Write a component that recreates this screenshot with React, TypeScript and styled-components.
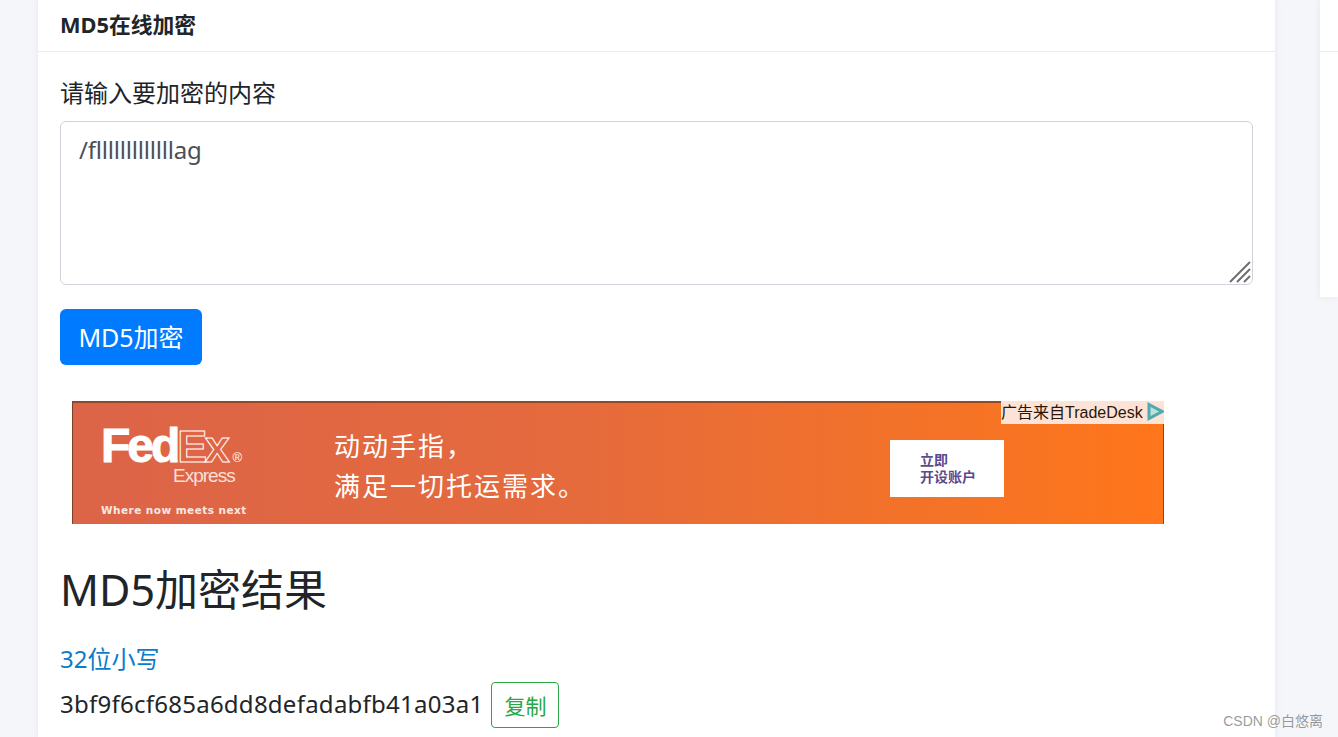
import * as React from "react";
import styled, { createGlobalStyle } from "styled-components";

const FONT = `"Noto Sans", "Noto Sans CJK SC", sans-serif`;

const GlobalStyle = createGlobalStyle`
	html, body {
		margin: 0;
		height: 737px;
		overflow: hidden;
		background: #f5f6f9;
		font-family: ${FONT};
		color: #212529;
	}
`;

const Page = styled.div`
	display: grid;
	grid-template-columns: 1237px 1fr;
	column-gap: 45px;
	align-items: start;
	height: 737px;
	padding-left: 38px;
	overflow: hidden;
`;

const Card = styled.main`
	background: #fff;
	height: 737px;
	box-shadow: 0 0 6px rgba(180, 190, 205, 0.25);
`;

const CardHeader = styled.header`
	height: 52px;
	box-sizing: border-box;
	padding: 0 0 4px 22px;
	border-bottom: 1px solid #e9ecef;
	display: flex;
	align-items: center;
	font-size: 21.8px;
	font-weight: 700;
	color: #212529;
`;

const CardBody = styled.section`
	padding: 0 22px;
`;

const FieldLabel = styled.label`
	display: block;
	margin-top: 23px;
	height: 46px;
	line-height: 36px;
	font-size: 24px;
`;

const TextBox = styled.div`
	position: relative;
	height: 164px;
`;

const Input = styled.textarea`
	display: block;
	box-sizing: border-box;
	width: 100%;
	height: 100%;
	padding: 10px 18px;
	border: 1px solid #ced4da;
	border-radius: 6px;
	background: #fff;
	color: #495057;
	font-family: ${FONT};
	font-size: 24px;
	letter-spacing: -0.2px;
	line-height: 36px;
	resize: none;
	outline: none;
`;

const Grip = styled.svg`
	position: absolute;
	right: 2px;
	bottom: 2px;
	width: 22px;
	height: 22px;
`;

const PrimaryButton = styled.button`
	display: block;
	margin-top: 24px;
	width: 142px;
	height: 56px;
	padding: 0 0 2px;
	border: none;
	border-radius: 6px;
	background: #007bff;
	color: #fff;
	font-family: ${FONT};
	font-size: 25px;
`;

const Ad = styled.aside`
	position: relative;
	margin: 36px 0 0 12px;
	width: 1092px;
	height: 123px;
	box-sizing: border-box;
	border-top: 2px solid #8f4a2c;
	border-left: 1px solid #7d4028;
	border-right: 1px solid #8a4a10;
	background: linear-gradient(90deg, #dc6448 0%, #e56a3d 45%, #f2722a 75%, #ff761b 100%);
	display: flex;
	color: #fff;
`;

const Brand = styled.div`
	width: 261px;
	padding-left: 28px;
	box-sizing: border-box;
	display: flex;
	flex-direction: column;
`;

const BrandMark = styled.div`
	margin-top: 23px;
	height: 40px;
	display: flex;
	align-items: baseline;
	font-family: "Liberation Sans", sans-serif;
	font-size: 48px;
	line-height: 40px;
	letter-spacing: -3px;
`;

const Fed = styled.span`
	font-weight: 700;
	-webkit-text-stroke: 1px #fff;
`;

const Ex = styled.span`
	font-weight: 700;
	font-size: 45px;
	letter-spacing: -2.5px;
	color: transparent;
	-webkit-text-stroke: 1px #fff;
`;

const Reg = styled.span`
	font-size: 13px;
	letter-spacing: 0;
	margin-left: 5px;
`;

const BrandSub = styled.div`
	margin-left: 72px;
	font-family: "Liberation Sans", sans-serif;
	font-size: 19px;
	line-height: 20px;
	letter-spacing: -1px;
	opacity: 0.8;
`;

const BrandTag = styled.div`
	margin-top: 17px;
	font-family: "DejaVu Sans", sans-serif;
	font-size: 10.5px;
	font-weight: 700;
	line-height: 14px;
	letter-spacing: 0.45px;
	opacity: 0.85;
`;

const Copy = styled.div`
	width: 556px;
	padding-top: 22px;
	font-family: "Noto Sans CJK SC", sans-serif;
	font-size: 26px;
	line-height: 40px;
	letter-spacing: 2px;
`;

const CtaBox = styled.div`
	margin-top: 37px;
	width: 114px;
	height: 57px;
	box-sizing: border-box;
	padding: 11px 0 0 30px;
	background: #fff;
	color: #5b4a8f;
	font-family: "Noto Sans CJK SC", sans-serif;
	font-size: 14px;
	font-weight: 700;
	line-height: 17px;
`;

const AdBadge = styled.div`
	position: absolute;
	top: -2px;
	right: -1px;
	width: 163px;
	height: 23px;
	box-sizing: border-box;
	padding-bottom: 3px;
	display: flex;
	align-items: center;
	justify-content: space-between;
	background: #fde3d6;
	color: #2a1608;
	font-family: "Liberation Sans", "Noto Sans CJK SC", sans-serif;
	font-size: 16px;
	white-space: nowrap;
`;

const AdIcon = styled.svg`
	width: 17px;
	height: 19px;
	flex: none;
`;

const ResultTitle = styled.h2`
	margin: 36px 0 0;
	height: 60px;
	line-height: 60px;
	font-size: 43px;
	font-weight: 400;
`;

const ResultLink = styled.a`
	display: block;
	margin-top: 21px;
	height: 36px;
	line-height: 36px;
	font-size: 24px;
	color: #0a7cc9;
`;

const ResultRow = styled.div`
	display: flex;
	align-items: center;
	gap: 8px;
	margin-top: 5px;
	font-size: 24px;
	letter-spacing: 0.25px;
`;

const HashText = styled.span`
	padding-bottom: 4px;
`;

const CopyButton = styled.button`
	width: 68px;
	height: 46px;
	padding: 0;
	border: 1px solid #28a745;
	border-radius: 4px;
	background: #fff;
	color: #28a745;
	font-family: ${FONT};
	font-size: 21px;
`;

const SideCard = styled.aside`
	background: #fff;
	height: 297px;
	box-shadow: 0 0 6px rgba(180, 190, 205, 0.25);
`;

const SideHeader = styled.div`
	height: 52px;
	box-sizing: border-box;
	border-bottom: 1px solid #e9ecef;
`;

const Watermark = styled.div`
	position: absolute;
	right: 15px;
	bottom: 7px;
	font-family: "Liberation Sans", "Noto Sans CJK SC", sans-serif;
	font-size: 14px;
	line-height: 18px;
	color: rgba(120, 120, 120, 0.75);
`;

const App = () => {
	return (
		<>
			<GlobalStyle />
			<Page>
				<Card>
					<CardHeader>MD5在线加密</CardHeader>
					<CardBody>
						<FieldLabel>请输入要加密的内容</FieldLabel>
						<TextBox>
							<Input readOnly value="/flllllllllllllag" />
							<Grip viewBox="0 0 22 22">
								<path d="M1 21 21 1M8 21 21 8M15 21 21 15" stroke="#6e6e6e" strokeWidth="2" fill="none" />
							</Grip>
						</TextBox>
						<PrimaryButton>MD5加密</PrimaryButton>
						<Ad>
							<Brand>
								<BrandMark>
									<Fed>Fed</Fed>
									<Ex>Ex</Ex>
									<Reg>®</Reg>
								</BrandMark>
								<BrandSub>Express</BrandSub>
								<BrandTag>Where now meets next</BrandTag>
							</Brand>
							<Copy>
								动动手指，
								<br />
								满足一切托运需求。
							</Copy>
							<CtaBox>
								立即
								<br />
								开设账户
							</CtaBox>
							<AdBadge>
								广告来自TradeDesk
								<AdIcon viewBox="0 0 17 19">
									<path d="M2 2.5 15 9.5 2 16.5Z" fill="#bfe0da" stroke="#4fa9ad" strokeWidth="3" />
								</AdIcon>
							</AdBadge>
						</Ad>
						<ResultTitle>MD5加密结果</ResultTitle>
						<ResultLink>32位小写</ResultLink>
						<ResultRow>
							<HashText>3bf9f6cf685a6dd8defadabfb41a03a1</HashText>
							<CopyButton>复制</CopyButton>
						</ResultRow>
					</CardBody>
				</Card>
				<SideCard>
					<SideHeader />
				</SideCard>
			</Page>
			<Watermark>CSDN @白悠离</Watermark>
		</>
	);
};

export default App;
